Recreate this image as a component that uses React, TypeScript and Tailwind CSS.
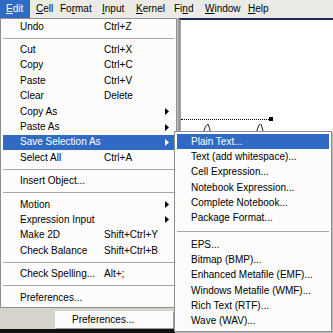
import React from "react";

type Item = { t: string; s?: string; sub?: boolean; hi?: boolean } | "sep";

const editItems: Item[] = [
  { t: "Undo", s: "Ctrl+Z" },
  "sep",
  { t: "Cut", s: "Ctrl+X" },
  { t: "Copy", s: "Ctrl+C" },
  { t: "Paste", s: "Ctrl+V" },
  { t: "Clear", s: "Delete" },
  { t: "Copy As", sub: true },
  { t: "Paste As", sub: true },
  { t: "Save Selection As", sub: true, hi: true },
  { t: "Select All", s: "Ctrl+A" },
  "sep",
  { t: "Insert Object..." },
  "sep",
  { t: "Motion", sub: true },
  { t: "Expression Input", sub: true },
  { t: "Make 2D", s: "Shift+Ctrl+Y" },
  { t: "Check Balance", s: "Shift+Ctrl+B" },
  "sep",
  { t: "Check Spelling...", s: "Alt+;" },
  "sep",
  { t: "Preferences..." },
];

const subItems: Item[] = [
  { t: "Plain Text...", hi: true },
  { t: "Text (add whitespace)..." },
  { t: "Cell Expression..." },
  { t: "Notebook Expression..." },
  { t: "Complete Notebook..." },
  { t: "Package Format..." },
  "sep",
  { t: "EPS..." },
  { t: "Bitmap (BMP)..." },
  { t: "Enhanced Metafile (EMF)..." },
  { t: "Windows Metafile (WMF)..." },
  { t: "Rich Text (RTF)..." },
  { t: "Wave (WAV)..." },
];

function Arrow({ white }: { white?: boolean }) {
  return (
    <svg width="4" height="7" viewBox="0 0 4 7" className="block">
      <path d="M0 0 L4 3.5 L0 7 Z" fill={white ? "#ffffff" : "#000000"} />
    </svg>
  );
}

function MenuTop({ pre, u, post, w, active }: { pre: string; u: string; post: string; w: string; active?: boolean }) {
  return (
    <div className={`${w} h-[18px] flex items-center pl-[6px] ${active ? "bg-[#316ac5] text-white" : "text-black"}`}>
      <span className="whitespace-nowrap">
        {pre}
        <span className="underline underline-offset-[1px]">{u}</span>
        {post}
      </span>
    </div>
  );
}

export default function App() {
  return (
    <div
      className="relative w-[333px] h-[333px] overflow-hidden bg-white text-[10px] leading-none text-black"
      style={{ fontFamily: '"Liberation Sans", Arial, sans-serif' }}
    >
      {/* Menu bar */}
      <div className="h-[18px] bg-[#ebeae4] flex">
        <MenuTop pre="" u="E" post="dit" w="w-[30px]" active />
        <MenuTop pre="" u="C" post="ell" w="w-[24px]" />
        <MenuTop pre="Fo" u="r" post="mat" w="w-[42px]" />
        <MenuTop pre="" u="I" post="nput" w="w-[34px]" />
        <MenuTop pre="" u="K" post="ernel" w="w-[38px]" />
        <MenuTop pre="Fi" u="n" post="d" w="w-[31px]" />
        <MenuTop pre="" u="W" post="indow" w="w-[43px]" />
        <MenuTop pre="" u="H" post="elp" w="w-[40px]" />
      </div>

      <div className="flex h-[315px]">
        {/* Left column: Edit menu + strip */}
        <div className="w-[178px] flex flex-col">
          <div className="w-[177px] h-[290px] bg-[#fcfcfc] border border-[#8f8f8f] shadow-[1px_1px_0_#b9b9b9] px-[2px] pt-0">
            {editItems.map((it, i) =>
              it === "sep" ? (
                <div key={i} className="h-[8px] flex items-center">
                  <div className="w-full h-px bg-[#a7a7a7]" />
                </div>
              ) : (
                <div
                  key={i}
                  className={`h-[15.4px] flex items-center pl-[17px] pr-[5px] ${it.hi ? "bg-[#316ac5] text-white" : ""}`}
                >
                  <span className="w-[84px] whitespace-nowrap">{it.t}</span>
                  <span className="flex-1 whitespace-nowrap">{it.s ?? ""}</span>
                  {it.sub ? <Arrow white={it.hi} /> : null}
                </div>
              )
            )}
          </div>
          {/* bottom strip with ghost item */}
          <div className="flex-1 bg-[#d6d3cb] flex flex-col">
            <div className="flex-1 flex items-start pt-[3px]">
              <div className="ml-[55px] w-[118px] h-[17px] bg-[#fbfbfb] shadow-[1px_1px_0_#9a9a9a] flex items-center pl-[17px] whitespace-nowrap">
                Preferences...
              </div>
            </div>
            <div className="h-[4px] bg-[#111111]" />
          </div>
        </div>

        {/* Notebook window */}
        <div className="flex-1 border-l-[3px] border-[#9c9c9c] border-t-2 border-t-[#1d2a5c] bg-white">
          <div className="h-[98px]" />
          <div className="flex items-center">
            <div className="w-[88px] border-t border-dotted border-black" />
            <div className="w-[4px] h-[4px] bg-black -mt-[1px]" />
          </div>
          <svg width="100" height="16" viewBox="0 0 100 16" className="block">
            <path d="M22 14 C23 8 25 4 27 3 C28 5 29 9 30 14" fill="none" stroke="#000" strokeWidth="0.9" />
            <path d="M75 14 C76 9 77 5 79 3" fill="none" stroke="#000" strokeWidth="0.9" />
            <path d="M80 3 C81 6 82 10 83 14" fill="none" stroke="#000" strokeWidth="0.9" />
          </svg>
        </div>
      </div>

      {/* Submenu */}
      <div className="absolute left-[174px] top-[131px] w-[158px] h-[201px] bg-[#fcfcfc] border border-[#8f8f8f] p-[2px] shadow-[1px_1px_0_#b9b9b9]">
        {subItems.map((it, i) =>
          it === "sep" ? (
            <div key={i} className="h-[11.2px] flex items-center">
              <div className="w-full h-px bg-[#a7a7a7]" />
            </div>
          ) : (
            <div
              key={i}
              className={`h-[15.3px] flex items-center pl-[14px] whitespace-nowrap ${it.hi ? "bg-[#316ac5] text-white" : ""}`}
            >
              {it.t}
            </div>
          )
        )}
      </div>
    </div>
  );
}
